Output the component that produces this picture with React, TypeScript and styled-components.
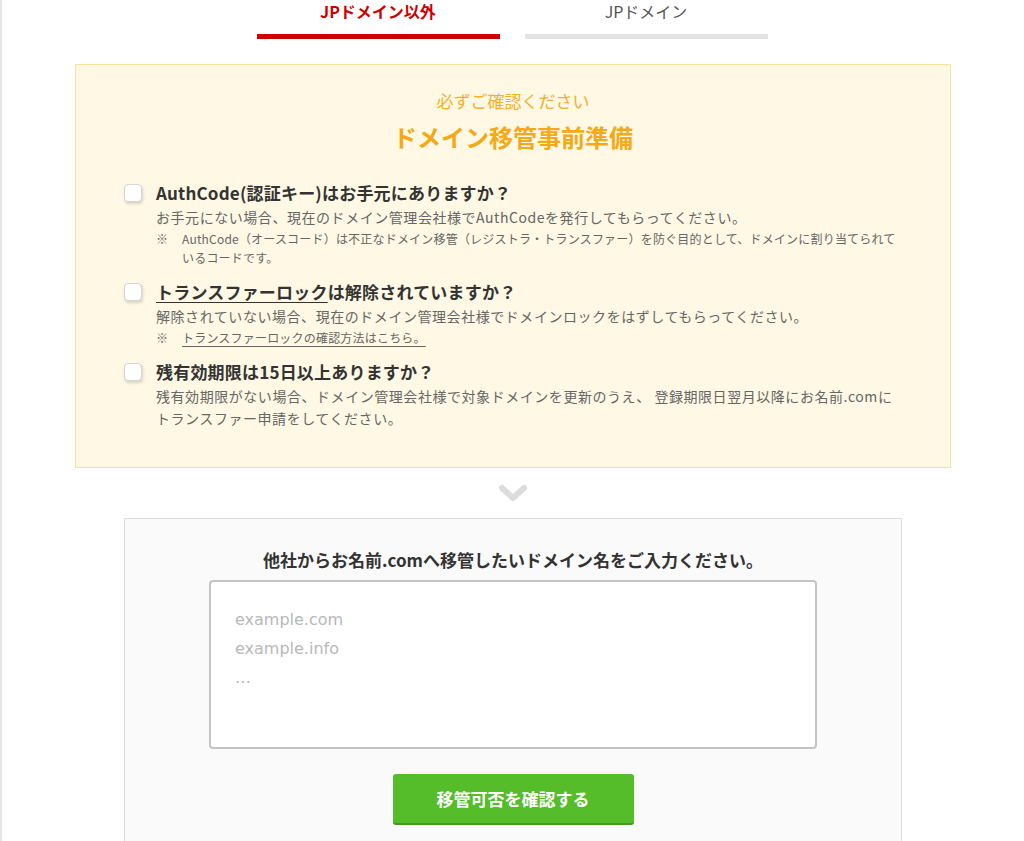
import * as React from "react";
import styled, { createGlobalStyle } from "styled-components";

const GlobalStyle = createGlobalStyle`
  html, body {
    margin: 0;
    padding: 0;
    background: #fff;
  }
  body {
    font-family: "Noto Sans CJK JP", "Noto Sans", sans-serif;
    color: #333;
  }
`;

const Page = styled.div`
  min-height: 841px;
  border-left: 2px solid #e6e6e6;
  box-sizing: border-box;
  overflow: hidden;
`;

const Tabs = styled.div`
  display: flex;
  justify-content: center;
  gap: 25px;
  margin-left: -2px;
`;

const Tab = styled.div<{ $active?: boolean }>`
  width: 243px;
  height: 33px;
  padding-top: 1px;
  border-bottom: 5px solid ${({ $active }) => ($active ? "#cc0000" : "#e3e3e3")};
  display: flex;
  align-items: flex-start;
  justify-content: center;
  font-size: 16px;
  line-height: 20px;
  font-weight: ${({ $active }) => ($active ? 700 : 400)};
  color: ${({ $active }) => ($active ? "#cc0000" : "#555")};
`;

const Notice = styled.section`
  margin: 25px 0 0 73px;
  width: 876px;
  box-sizing: border-box;
  background: #fef8e4;
  border: 1px solid #fbe29c;
  padding: 24px 0 38px 48px;
`;

const Kicker = styled.p`
  margin: 0;
  text-align: center;
  font-size: 17px;
  line-height: 24px;
  color: #f6ae2d;
  padding-right: 48px;
`;

const Heading = styled.h2`
  margin: 8px 0 0;
  text-align: center;
  font-size: 24px;
  line-height: 32px;
  font-weight: 700;
  color: #f5a916;
  padding-right: 48px;
`;

const CheckList = styled.div`
  margin-top: 27px;
  display: flex;
  flex-direction: column;
  gap: 12px;
`;

const CheckItem = styled.label`
  display: grid;
  grid-template-columns: 18px 1fr;
  column-gap: 14px;
  align-items: start;
`;

const Box = styled.span`
  width: 18px;
  height: 18px;
  margin-top: 4px;
  box-sizing: border-box;
  border: 1px solid #d4d4d4;
  border-radius: 4px;
  background: #fff;
  box-shadow: 1px 2px 3px rgba(0, 0, 0, 0.15);
`;

const ItemTitle = styled.div`
  font-size: 17px;
  line-height: 26px;
  font-weight: 700;
  letter-spacing: 0.2px;
  color: #333;
`;

const Underlined = styled.span`
  text-decoration: underline;
  text-underline-offset: 3px;
  text-decoration-thickness: 1px;
`;

const Desc = styled.p`
  margin: 0;
  font-size: 14px;
  line-height: 22px;
  letter-spacing: 0.55px;
  color: #666;
  padding-right: 48px;
`;

const Note = styled.p`
  margin: 1px 0 0;
  display: grid;
  grid-template-columns: 26px 1fr;
  font-size: 12px;
  line-height: 19px;
  letter-spacing: 0.2px;
  color: #666;
  padding-right: 45px;
`;

const NoteLink = styled.a`
  color: #666;
  text-decoration: underline;
  text-underline-offset: 3px;
`;

const Chevron = styled.div`
  display: flex;
  justify-content: center;
  padding: 16px 0;
`;

const Panel = styled.section`
  margin-left: 122px;
  width: 778px;
  box-sizing: border-box;
  background: #fafafa;
  border: 1px solid #dcdcdc;
  border-bottom: none;
  padding: 29px 0 40px;
  display: flex;
  flex-direction: column;
  align-items: center;
`;

const PanelTitle = styled.p`
  margin: 0;
  font-size: 17px;
  line-height: 24px;
  font-weight: 700;
  color: #333;
`;

const DomainInput = styled.textarea`
  margin-top: 8px;
  width: 608px;
  height: 169px;
  box-sizing: border-box;
  border: 2px solid #c4c4c4;
  border-radius: 4px;
  background: #fff;
  padding: 23px 24px;
  font-family: "DejaVu Sans", "Noto Sans CJK JP", sans-serif;
  font-size: 16px;
  line-height: 29px;
  resize: none;
  outline: none;
  color: #333;
  &::placeholder {
    color: #b8b8b8;
  }
`;

const Submit = styled.button`
  margin-top: 25px;
  width: 241px;
  height: 51px;
  border: none;
  border-bottom: 2px solid #3f9e1c;
  border-radius: 3px;
  background: #55bd2a;
  color: #fff;
  font-family: "Noto Sans CJK JP", "Noto Sans", sans-serif;
  font-size: 17px;
  font-weight: 700;
  cursor: pointer;
`;

export default function App() {
  return (
    <Page>
      <GlobalStyle />
      <Tabs>
        <Tab $active>JPドメイン以外</Tab>
        <Tab>JPドメイン</Tab>
      </Tabs>

      <Notice>
        <Kicker>必ずご確認ください</Kicker>
        <Heading>ドメイン移管事前準備</Heading>
        <CheckList>
          <CheckItem>
            <Box />
            <div>
              <ItemTitle>AuthCode(認証キー)はお手元にありますか？</ItemTitle>
              <Desc>お手元にない場合、現在のドメイン管理会社様でAuthCodeを発行してもらってください。</Desc>
              <Note>
                <span>※</span>
                <span>
                  AuthCode（オースコード）は不正なドメイン移管（レジストラ・トランスファー）を防ぐ目的として、ドメインに割り当てられているコードです。
                </span>
              </Note>
            </div>
          </CheckItem>
          <CheckItem>
            <Box />
            <div>
              <ItemTitle>
                <Underlined>トランスファーロック</Underlined>は解除されていますか？
              </ItemTitle>
              <Desc>解除されていない場合、現在のドメイン管理会社様でドメインロックをはずしてもらってください。</Desc>
              <Note>
                <span>※</span>
                <span>
                  <NoteLink>トランスファーロックの確認方法はこちら。</NoteLink>
                </span>
              </Note>
            </div>
          </CheckItem>
          <CheckItem>
            <Box />
            <div>
              <ItemTitle>残有効期限は15日以上ありますか？</ItemTitle>
              <Desc>
                残有効期限がない場合、ドメイン管理会社様で対象ドメインを更新のうえ、 登録期限日翌月以降にお名前.comにトランスファー申請をしてください。
              </Desc>
            </div>
          </CheckItem>
        </CheckList>
      </Notice>

      <Chevron>
        <svg width="30" height="18" viewBox="0 0 30 18">
          <path d="M4 4 L15 14 L26 4" fill="none" stroke="#dcdcdc" strokeWidth="6" strokeLinecap="round" strokeLinejoin="round" />
        </svg>
      </Chevron>

      <Panel>
        <PanelTitle>他社からお名前.comへ移管したいドメイン名をご入力ください。</PanelTitle>
        <DomainInput placeholder={"example.com\nexample.info\n…"} />
        <Submit>移管可否を確認する</Submit>
      </Panel>
    </Page>
  );
}
